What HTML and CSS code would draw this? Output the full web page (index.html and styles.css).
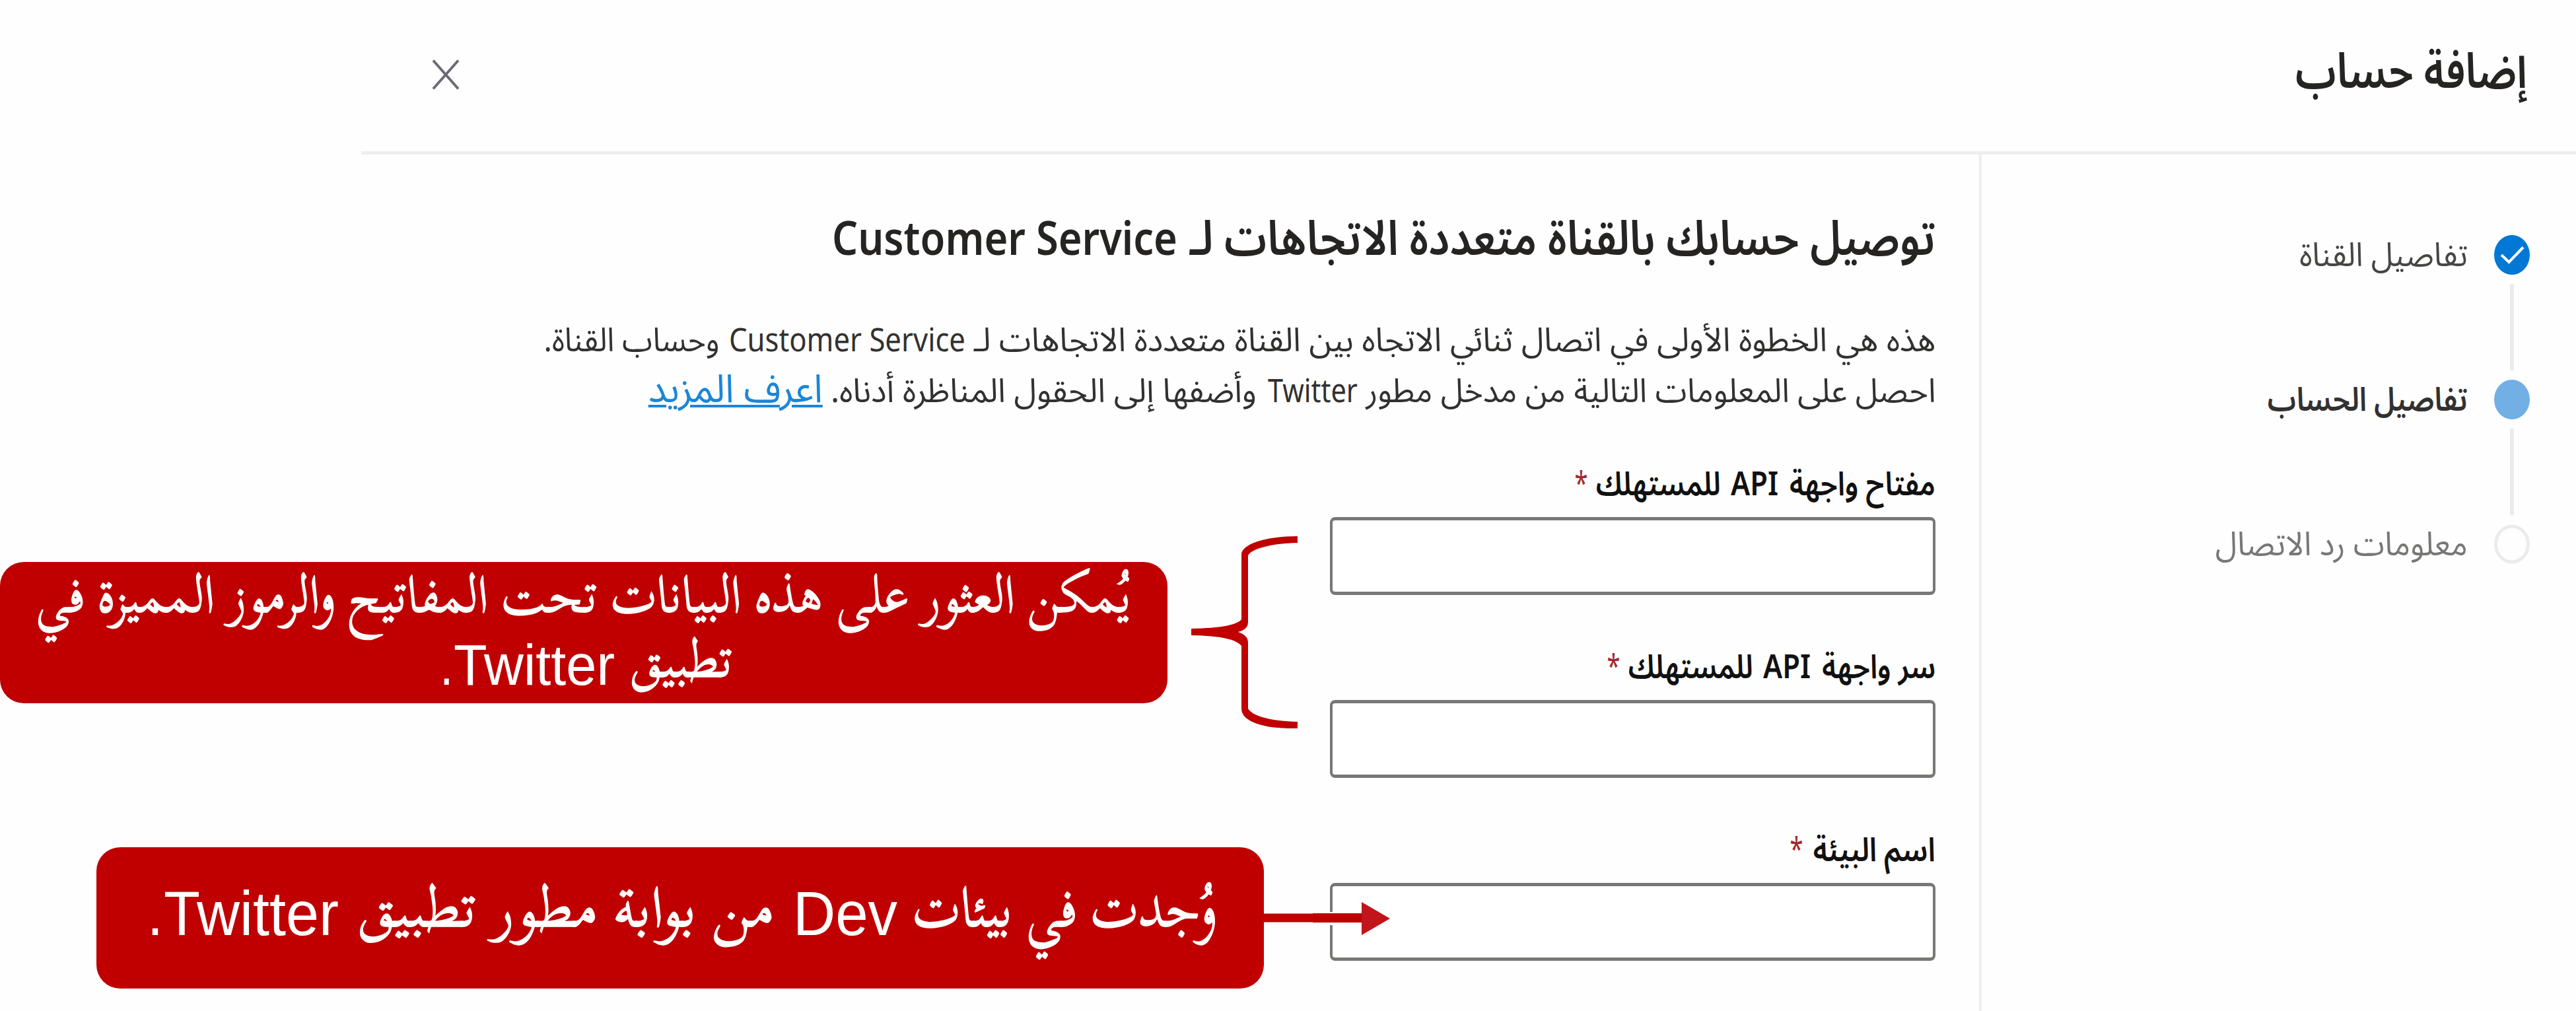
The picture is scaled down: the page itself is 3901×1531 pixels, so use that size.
FILE: index.html
```html
<!DOCTYPE html>
<html lang="ar" dir="rtl">
<head>
<meta charset="utf-8">
<title>إضافة حساب</title>
<link rel="stylesheet" href="styles.css">
</head>
<body>
<div class="panel">
  <header class="header">
    <h1 class="title"><span class="run" data-fit="351">إضافة حساب</span></h1>
    <svg class="close" viewBox="0 0 44 50"><path d="M3 3.500 41 46.500M41 3.500 3 46.500"/></svg>
  </header>
  <div class="body">
    <nav class="steps">
      <div class="step">
        <svg class="dot" viewBox="0 0 54 60"><ellipse class="done" cx="27" cy="30" rx="27" ry="30"/><path class="tick" d="M11 30 22.500 41 44 18.500"/></svg>
        <span class="run" data-fit="255">تفاصيل القناة</span>
      </div>
      <div class="link-line"></div>
      <div class="step current">
        <svg class="dot" viewBox="0 0 54 60"><ellipse class="now" cx="27" cy="30" rx="27" ry="30"/></svg>
        <span class="run" data-fit="303">تفاصيل الحساب</span>
      </div>
      <div class="link-line"></div>
      <div class="step next">
        <svg class="dot" viewBox="0 0 54 60"><ellipse class="todo" cx="27" cy="30" rx="24.500" ry="27"/></svg>
        <span class="run" data-fit="382">معلومات رد الاتصال</span>
      </div>
    </nav>
    <main class="main">
      <h2 class="heading"><span class="run" data-fit="1130">توصيل حسابك بالقناة متعددة الاتجاهات لـ</span><span class="run latin g18" data-fit="523">Customer Service</span></h2>
      <div class="intro">
        <p><span class="run" data-fit="1457">هذه هي الخطوة الأولى في اتصال ثنائي الاتجاه بين القناة متعددة الاتجاهات لـ</span><span class="run latin g12" data-fit="358">Customer Service</span><span class="run g14" data-fit="266">وحساب القناة.</span></p>
        <p><span class="run" data-fit="863">احصل على المعلومات التالية من مدخل مطور</span><span class="run latin g12" data-fit="136">Twitter</span><span class="run g16" data-fit="645">وأضفها إلى الحقول المناظرة أدناه.</span><a class="run more g12" data-fit="264">اعرف المزيد</a></p>
      </div>
      <div class="field">
        <label class="label"><span class="run" data-fit="221">مفتاح واجهة</span><span class="run latin g16" data-fit="72">API</span><span class="run g14" data-fit="189">للمستهلك</span><span class="run star g12" data-fit="20">*</span></label>
        <input class="input" type="text">
      </div>
      <div class="field">
        <label class="label"><span class="run" data-fit="172">سر واجهة</span><span class="run latin g16" data-fit="72">API</span><span class="run g14" data-fit="189">للمستهلك</span><span class="run star g12" data-fit="20">*</span></label>
        <input class="input" type="text">
      </div>
      <div class="field">
        <label class="label"><span class="run" data-fit="185">اسم البيئة</span><span class="run star g14" data-fit="20">*</span></label>
        <input class="input" type="text">
      </div>
    </main>
  </div>
</div>

<div class="callout keys">
  <div><span class="run arabic" data-fit="1659">يُمكن العثور على هذه البيانات تحت المفاتيح والرموز المميزة في</span></div>
  <div class="second"><span class="run arabic" data-fit="156">تطبيق</span><span class="run latin g24" data-fit="244">Twitter</span><span class="run" data-fit="20">.</span></div>
</div>
<svg class="brace" viewBox="0 0 162 292"><path d="M161 0V10C120 11 92 19 86 29V130C86 137 82 142 71 145C82 149 86 154 86 161V261C92 272 120 280 161 281V291C112 292 76 282 76 261V166C68 156 45 151 0 150V140C45 139 68 135 76 126V28C76 12 112 0 161 0Z"/></svg>

<div class="callout env">
  <div><span class="run arabic" data-fit="461">وُجدت في بيئات</span><span class="run latin g24" data-fit="158">Dev</span><span class="run arabic g28" data-fit="632">من بوابة مطور تطبيق</span><span class="run latin g28" data-fit="265">Twitter</span><span class="run" data-fit="24">.</span></div>
</div>
<svg class="arrow" viewBox="0 0 194 52"><path class="halo" d="M96 15H150V35H96Z"/><path class="shaft" d="M0 17.500H75V17H151V31H75V30.500H0Z"/><path class="head" d="M149 0 192 25 149 50Z"/></svg>
<script src="fit.js"></script>
</body>
</html>
```
FILE: styles.css
```css
* { box-sizing: border-box; margin: 0; padding: 0; }

body {
  position: relative;
  width: 3901px;
  height: 1531px;
  overflow: hidden;
  background: #fefefe;
  color: #323130;
  font-family: "Noto Sans", "Noto Sans Arabic", "DejaVu Sans", sans-serif;
}

.run { display: inline-block; white-space: nowrap; }
.run > i { display: inline-block; font-style: normal; transform-origin: right center; }
.latin { direction: ltr; }
.latin > i { transform-origin: left center; }

.g12 { margin-right: 12px; }
.g14 { margin-right: 15px; }
.g16 { margin-right: 17px; }
.g18 { margin-right: 18px; }
.g24 { margin-right: 23px; }
.g28 { margin-right: 28px; }

.panel { width: 3354px; height: 1531px; }

.header {
  display: flex;
  justify-content: space-between;
  align-items: flex-start;
  height: 234px;
  padding: 55px 74px 0 106px;
  border-bottom: 5px solid #efeeed;
}
.title { font-size: 74px; line-height: 100px; font-weight: 600; color: #252423; }
.close { width: 44px; height: 50px; margin-top: 33px; fill: none; stroke: #6c6874; stroke-width: 4; }

.body { display: flex; height: 1297px; }

.steps { width: 900px; padding: 122px 70px 0 0; font-size: 50px; line-height: 56px; color: #484644; }
.step { display: flex; align-items: center; height: 60px; gap: 40px; }
.step .run { margin-bottom: 4px; }
.dot { width: 54px; height: 60px; display: block; }
.done { fill: #0078d4; }
.now { fill: #71afe5; }
.todo { fill: none; stroke: #edebe9; stroke-width: 5; }
.tick { fill: none; stroke: #fff; stroke-width: 4; }
.current { font-weight: 600; color: #323130; }
.next { color: #797775; }
.link-line { width: 6px; height: 131px; margin: 14px 24px 14px 0; background: #edebe9; }

.main { flex: 1; padding: 73px 66px 0 0; border-right: 4px solid #efeeed; }
.heading { height: 100px; font-size: 73px; line-height: 102px; font-weight: 600; color: #252423; white-space: nowrap; }
.heading .latin { font-size: 70px; font-weight: 600; }
.intro { margin-top: 68px; font-size: 50px; line-height: 76.5px; }
.intro p { height: 76.5px; white-space: nowrap; }
.more { font-size: 59px; line-height: 60px; color: #1a86d9; }
.more > i { text-decoration: underline; text-decoration-thickness: 4px; text-underline-offset: 4px; }

.field { height: 277px; }
.intro + .field { margin-top: 68px; }
.label { display: block; height: 70px; font-size: 50px; line-height: 71px; font-weight: 600; color: #111; white-space: nowrap; }
.star { color: #a4262c; font-weight: 400; }
.input {
  display: block;
  width: 917px;
  height: 118px;
  margin-top: 17px;
  border: solid #797775;
  border-width: 5px 4px;
  border-radius: 8px;
  background: #fff;
  outline: 0;
}

.callout {
  position: absolute;
  display: flex;
  flex-direction: column;
  align-items: center;
  height: 214px;
  border-radius: 36px;
  background: #c00000;
  color: #fff;
  font-family: "Liberation Sans", "DejaVu Sans", sans-serif;
  white-space: nowrap;
}
.callout .arabic {
  font-family: "Scheherazade New", "Noto Naskh Arabic", "DejaVu Sans", sans-serif;
  font-weight: 400;
  line-height: 0;
  vertical-align: 12px;
  -webkit-text-stroke: 1.5px #fff;
}
.keys { left: 0; top: 851px; width: 1768px; padding-top: 9px; font-size: 87px; line-height: 98px; }
.keys > .second { padding-left: 8px; }
.keys .arabic { font-size: 80px; }
.env { left: 146px; top: 1283px; width: 1768px; justify-content: center; padding: 0 0 12px 6px; font-size: 94px; line-height: 98px; }
.env .arabic { font-size: 87px; vertical-align: 13px; }

.brace { position: absolute; left: 1804px; top: 812px; width: 162px; height: 292px; fill: #c00000; }
.arrow { position: absolute; left: 1913px; top: 1366px; width: 194px; height: 52px; }
.halo { fill: #fefefe; }
.shaft { fill: #c00000; }
.head { fill: #c2141b; }
```
FILE: fit.js
```
// Scales every text run horizontally to the width given in data-fit.
document.querySelectorAll('.run').forEach(function (run) {
  var inner = document.createElement('i');
  inner.textContent = run.textContent;
  run.textContent = '';
  run.appendChild(inner);
  var target = Number(run.dataset.fit);
  var scale = target / inner.getBoundingClientRect().width;
  run.style.width = target + 'px';
  inner.style.transform = 'scaleX(' + scale.toFixed(4) + ')';
});
```
